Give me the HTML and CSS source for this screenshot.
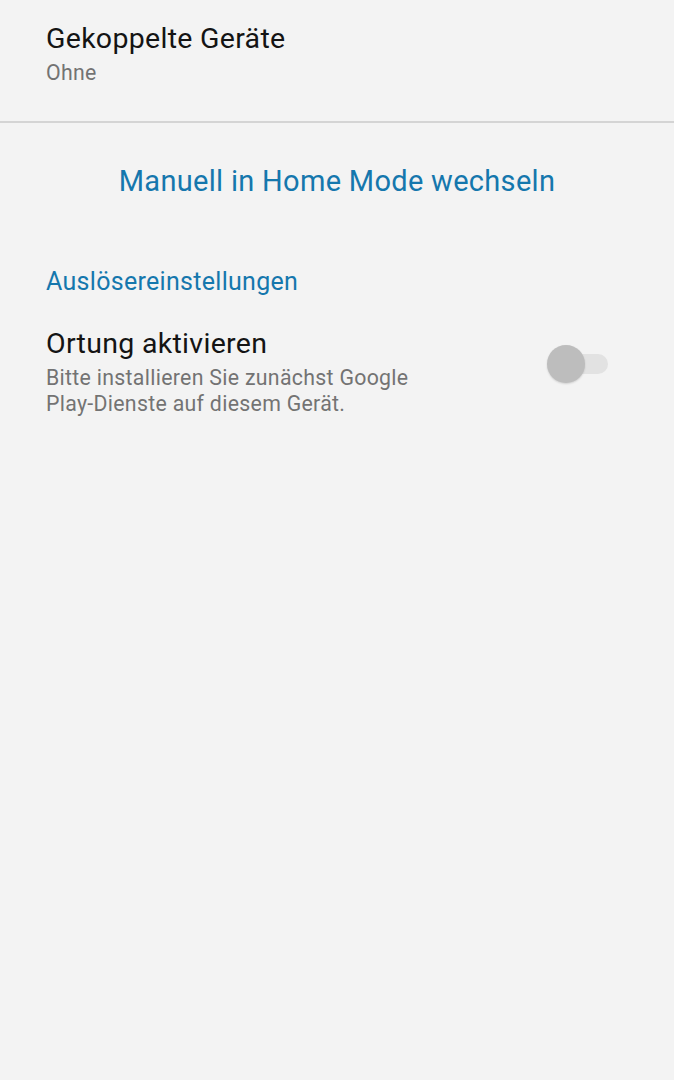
FILE: index.html
```html
<!DOCTYPE html>
<html lang="de">
  <head>
    <meta charset="UTF-8" />
    <title>Home Mode</title>
    <link rel="stylesheet" href="styles.css">
  </head>
  <body>
    <div id="app">
      <div class="pref-item pref-top">
        <div class="pref-title">Gekoppelte Geräte</div>
        <div class="pref-summary">Ohne</div>
      </div>

      <div class="divider"></div>

      <div class="action-row">
        <span class="action-link">Manuell in Home Mode wechseln</span>
      </div>

      <div class="category">Auslösereinstellungen</div>

      <div class="pref-item pref-switch">
        <div class="pref-text">
          <div class="pref-title">Ortung aktivieren</div>
          <div class="pref-summary">Bitte installieren Sie zunächst Google Play-Dienste auf diesem Gerät.</div>
        </div>
        <div class="switch">
          <div class="switch-track"></div>
          <div class="switch-thumb"></div>
        </div>
      </div>
    </div>
  </body>
</html>
```

FILE: styles.css
```css
html {
  background: #f3f3f3;
}

body {
  margin: 0px;
  font-family: Roboto, "Noto Sans", sans-serif;
  letter-spacing: 0.3px;
}

#app {
  min-height: 100vh;
  display: flex;
  flex-flow: column;
}

.pref-item {
  padding: 0px 46px;
}

.pref-top {
  padding-top: 20px;
  height: 100px;
  box-sizing: border-box;

  .pref-title {
    line-height: 38px;
  }

  .pref-summary {
    margin-top: 2px;
  }
}

.pref-title {
  color: #141414;
  font-size: 28.5px;
  line-height: 40px;
}

.pref-summary {
  color: #737373;
  font-size: 21.3px;
  line-height: 26px;
}

.divider {
  height: 2px;
  margin-top: 21px;
  background: #d4d4d4;
}

.action-row {
  display: flex;
  justify-content: center;
  padding-top: 38px;
  height: 100px;
  box-sizing: border-box;
}

.action-link {
  color: #1577ad;
  font-size: 29px;
  line-height: 40px;
}

.category {
  color: #1577ad;
  font-size: 25px;
  line-height: 30px;
  padding: 44px 46px 0px;
}

.pref-switch {
  display: flex;
  align-items: flex-start;
  justify-content: space-between;
  padding-top: 27px;
  padding-right: 66px;

  .pref-summary {
    margin-top: 1px;
  }
}

.pref-text {
  width: 390px;
}

.switch {
  width: 61px;
  height: 40px;
  position: relative;
  margin-top: 20px;
}

.switch-track {
  position: absolute;
  left: 6px;
  right: 0px;
  top: 10px;
  height: 20px;
  border-radius: 10px;
  background: #e2e2e2;
}

.switch-thumb {
  position: absolute;
  left: 0px;
  top: 1px;
  width: 38px;
  height: 38px;
  border-radius: 50%;
  background: #bdbdbd;
  box-shadow: 0px 1px 2px rgba(0, 0, 0, 0.15);
}
```
